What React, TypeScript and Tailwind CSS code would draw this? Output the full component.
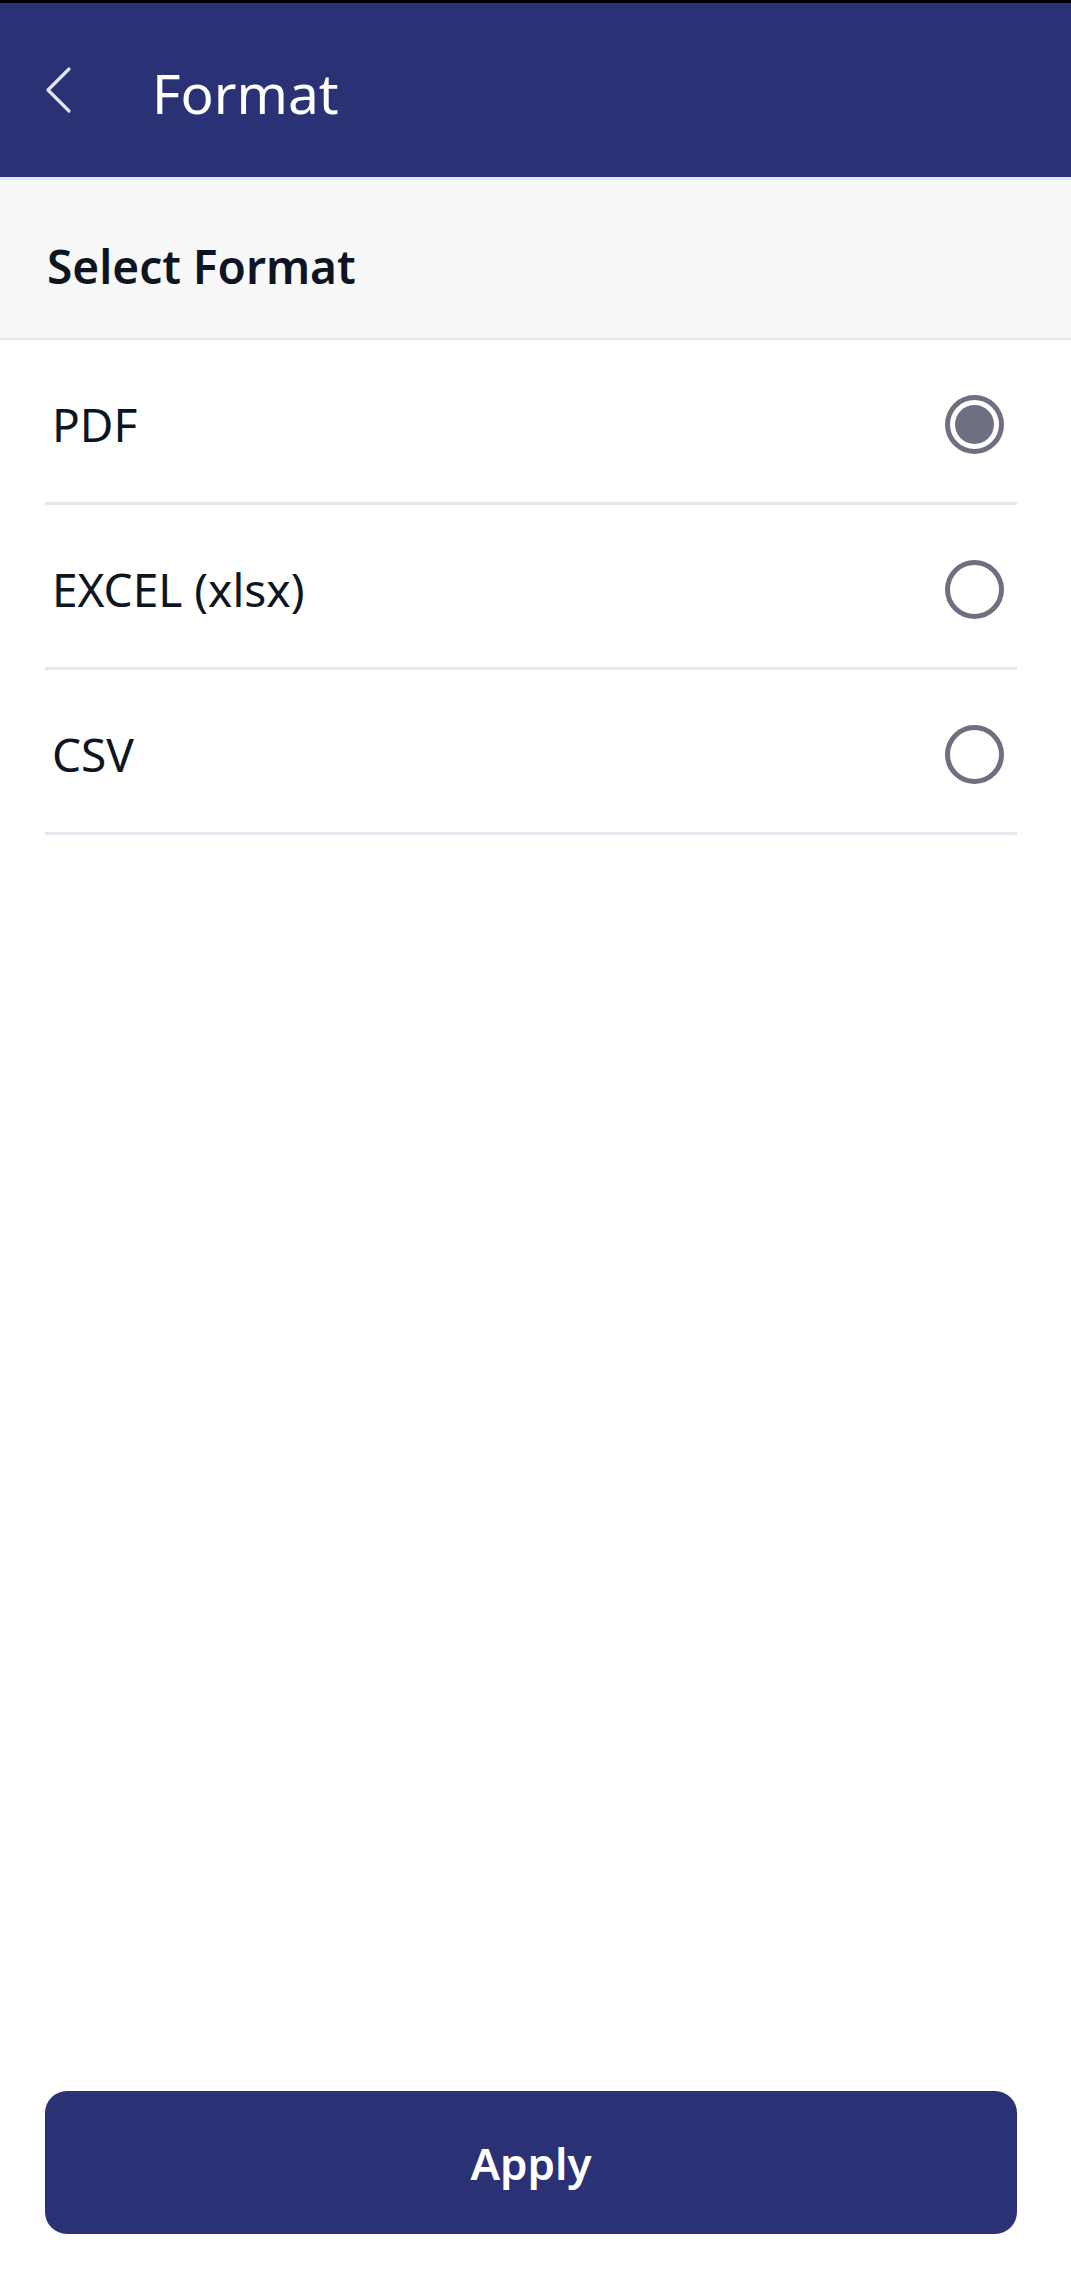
import { useState } from 'react';

const FORMATS = ['PDF', 'EXCEL (xlsx)', 'CSV'];

export default function App() {
  const [selected, setSelected] = useState('PDF');

  return (
    <div className="min-h-[2295px] flex flex-col bg-white font-['Noto_Sans',sans-serif]">
      {/* Header */}
      <div className="h-[177px] bg-[#2a3275] border-t-[3px] border-black flex items-center">
        <button type="button" className="ml-[42px] w-[32px] h-[48px] flex items-center justify-center">
          <svg width="28" height="48" viewBox="0 0 28 48" fill="none">
            <path d="M25 3 L4 24 L25 45" stroke="#e4e4f4" strokeWidth="3.2" strokeLinecap="round" strokeLinejoin="round" />
          </svg>
        </button>
        <h1 className="ml-[78px] text-[55px] text-white leading-none pt-[4px]">Format</h1>
      </div>

      {/* Section title */}
      <div className="h-[163px] bg-[#f8f8f8] border-t-[3px] border-b-[2px] border-[#e1e4ee] flex items-center px-[47px]">
        <span className="text-[46px] font-semibold text-[#0d1422] leading-none pt-[14px]">Select Format</span>
      </div>

      {/* Options */}
      <div className="ml-[45px] mr-[54px]">
        {FORMATS.map(format => (
          <button
            key={format}
            type="button"
            onClick={() => setSelected(format)}
            className="w-full h-[165px] flex items-center justify-between pl-[7px] pr-[13px] pt-[6px] border-b-[3px] border-[#e3e7ee] text-left"
          >
            <span className="text-[46px] text-[#0d1422] leading-none">{format}</span>
            <span className="w-[59px] h-[59px] rounded-full border-[5px] border-[#6e6f80] flex items-center justify-center">
              {selected === format && <span className="w-[39px] h-[39px] rounded-full bg-[#6e6f80]" />}
            </span>
          </button>
        ))}
      </div>

      {/* Apply */}
      <div className="mt-auto ml-[45px] mr-[54px] mb-[61px]">
        <button
          type="button"
          className="w-full h-[143px] rounded-[22px] bg-[#2a3275] text-white text-[44px] font-semibold"
        >
          Apply
        </button>
      </div>
    </div>
  );
}
